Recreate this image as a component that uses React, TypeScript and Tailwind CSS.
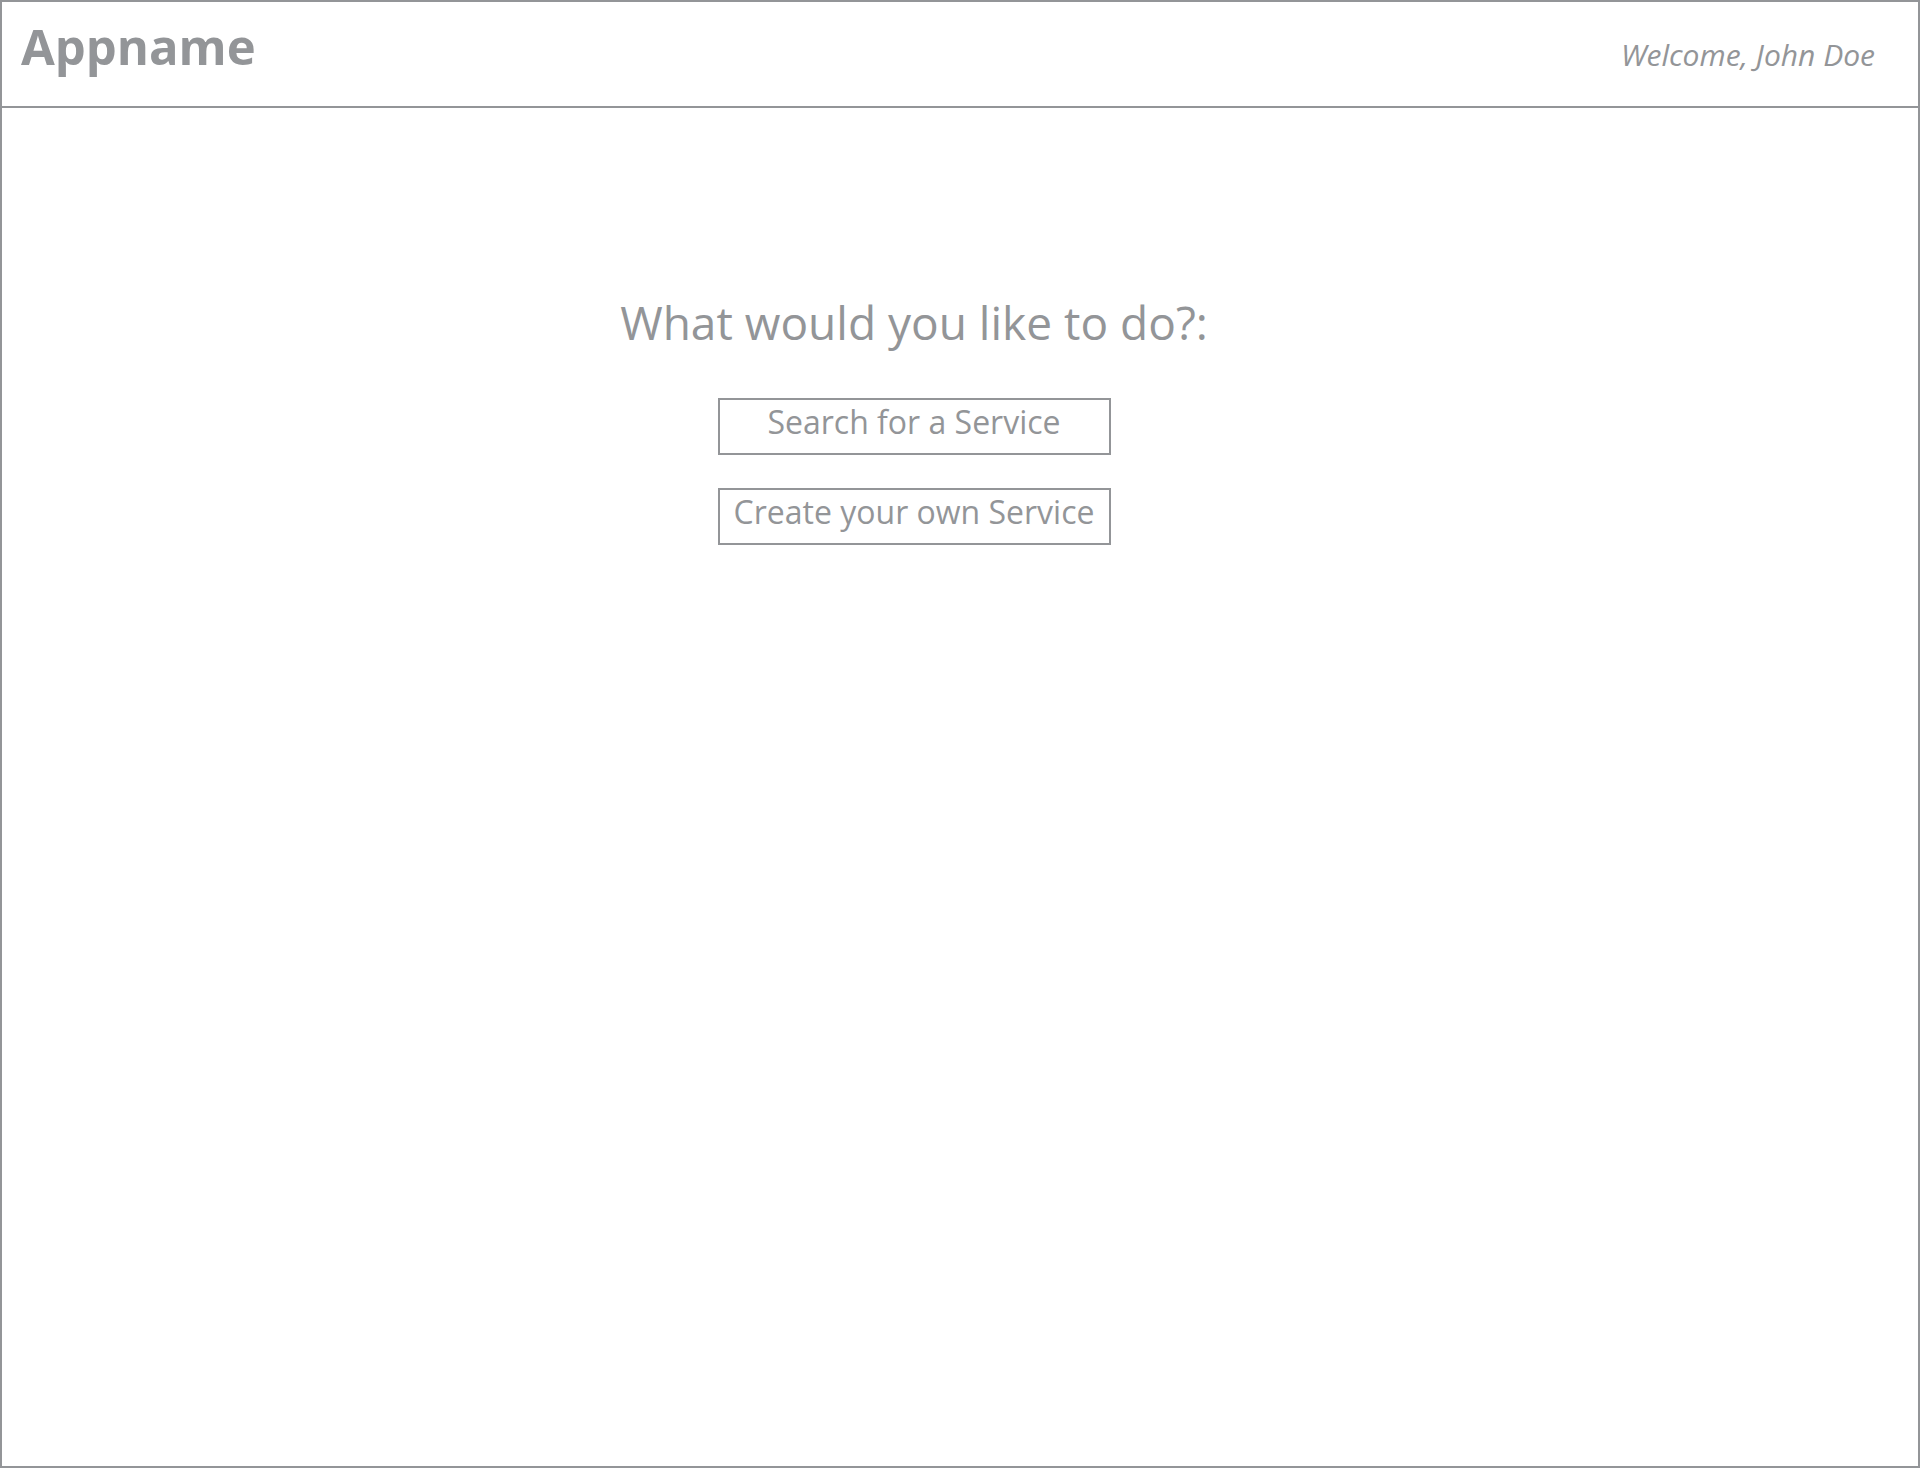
export default function App() {
  return (
    <div className="w-[1920px] h-[1468px] bg-white border-2 border-[#939598] flex flex-col font-['Open_Sans','Liberation_Sans',sans-serif] text-[#939598]">
      {/* Top bar */}
      <header className="h-[106px] border-b-2 border-[#939598] flex items-start justify-between pl-[19px] pr-[43px]">
        <div className="pt-[20px] text-[49px] leading-[49px] font-bold">Appname</div>
        <div className="pt-[38px] text-[30px] leading-[30px] italic">Welcome, John Doe</div>
      </header>

      {/* Main */}
      <main className="flex-1 flex flex-col items-center pr-[92px] pt-[191px]">
        <h1 className="text-[46px] leading-[46px] font-normal">What would you like to do?:</h1>
        <button className="mt-[53px] w-[393px] h-[57px] border-2 border-[#939598] pt-[6px] text-[32px] leading-[32px] flex justify-center items-start">
          Search for a Service
        </button>
        <button className="mt-[33px] w-[393px] h-[57px] border-2 border-[#939598] pt-[6px] text-[32px] leading-[32px] flex justify-center items-start">
          Create your own Service
        </button>
      </main>
    </div>
  );
}
